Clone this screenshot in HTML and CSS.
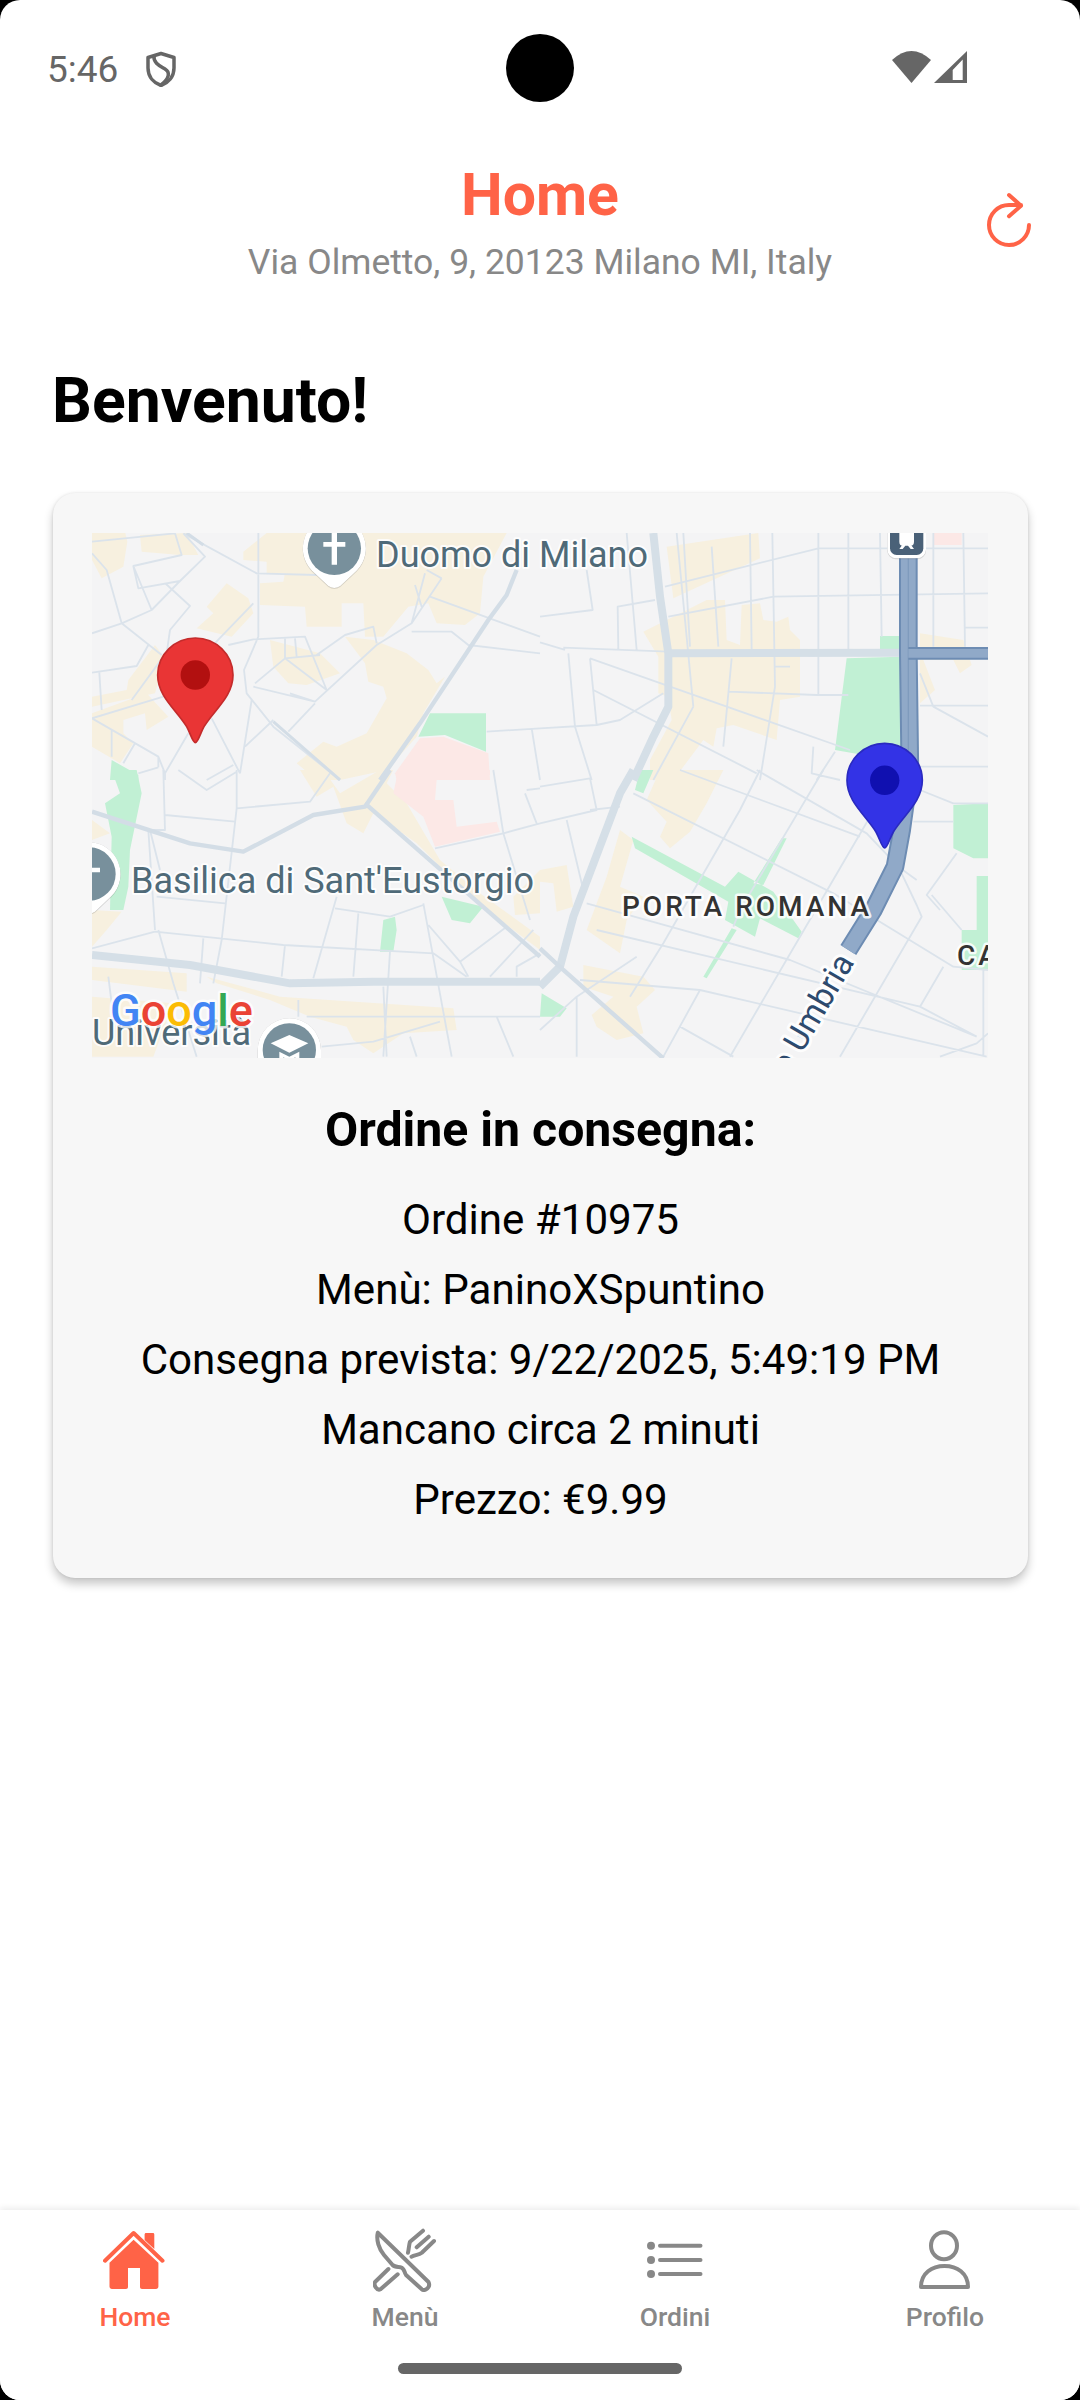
FILE: index.html
```html
<!DOCTYPE html>
<html lang="it">
<head>
<meta charset="utf-8">
<title>Home</title>
<link rel="stylesheet" href="styles.css">
</head>
<body>
<div class="phone">
  <div class="statusbar">
    <div class="status-left">
      <span class="time">5:46</span>
      <svg class="shield" viewBox="0 0 30 36"><path class="shield-line" d="M15 2.500 28 6.500V17C28 26 22 32 15 34.500 8 32 2 26 2 17V6.500Z"/><path class="shield-line" d="M8 4.500C7 12 14 15 19 18 24 21 24 27 15 34"/></svg>
    </div>
    <div class="camera"></div>
    <div class="status-right">
      <svg class="wifi" viewBox="0 0 39 32"><path class="status-fill" d="M0 9Q19.500-9 39 9L19.500 32Z"/></svg>
      <svg class="signal" viewBox="0 0 33 32"><path class="status-fill" fill-rule="evenodd" d="M0 32 33 0V32ZM18.700 29H28.700V8.500L18.700 19Z"/></svg>
    </div>
  </div>

  <header class="topbar">
    <h1 class="title">Home</h1>
    <p class="address">Via Olmetto, 9, 20123 Milano MI, Italy</p>
    <svg class="refresh" viewBox="0 0 50 58"><path class="refresh-line" d="M24 3 36 13.700 24 24.300M36 13H24A20 20 0 1 0 44 33"/></svg>
  </header>

  <main class="content">
    <h2 class="welcome">Benvenuto!</h2>
    <section class="card">
      <svg class="map" viewBox="0 0 896 525">
        <rect class="m-bg" width="896" height="525"/>
        <!-- areas -->
        <g transform="translate(-52 -53) scale(.33333)">
          <path class="m-beige" d="M156 159H256L262 185 250 260 185 295 156 240ZM300 165 440 159 475 225 420 225 305 215ZM500 380 560 310 625 355 640 400 575 470 470 445 520 400ZM610 215 680 159H1400L1330 290 1320 400 1275 435 1190 430 1165 370 1105 380 1030 470 975 470 970 370 905 370 905 440 800 440 795 380 660 375 660 310 730 305 735 280 680 280 680 245 610 240ZM915 470 1000 480 1100 520 1165 570 1190 610 1215 590 1150 700 1130 770 1040 870 900 900H830L770 850 850 785 890 800 980 760 1040 655 1030 620 985 605 975 550ZM690 480 840 520 900 580 800 615 745 610 700 560ZM265 600 345 495 375 535 345 640 156 680V650L260 630ZM156 700 320 640 385 710 320 750 315 700 250 720 250 760 280 790 240 850 156 800Z"/>
          <path class="m-pink" d="M1065 880 1140 775 1210 770 1345 820 1350 900H1070Z"/>
          <path class="m-green" d="M1170 700H1338V815L1215 765 1135 770ZM215 840 295 885V900H210Z"/>
        </g>
        <g transform="translate(448 -53) scale(.33333)">
          <path class="m-beige" d="M380 200 655 159 660 235 400 355ZM310 455 400 410 500 360H555L560 480 600 495 605 375 660 370 670 420 710 425 745 410 750 450 780 480V650L720 660 710 780 580 735 530 745 520 800 490 780 400 900H330V840L395 720 385 650 355 640 355 530ZM1140 460 1270 480 1295 555 1260 580 1240 540H1150L1185 630 1140 670Z"/>
          <path class="m-green" d="M1020 468H1080L1085 800 1000 830 885 810 920 535 1080 530 1020 510Z"/>
          <path class="m-pink" d="M1180 159H1265V195H1180Z"/>
        </g>
        <g transform="translate(-52 237) scale(.33333)">
          <path class="m-beige" d="M780 0H850L900 70 1020 0H1060L1040 40 1100 100 1200 270 1320 370 1500 500V540L1300 390 1130 220 1060 170 1000 130 970 190 920 160 880 50 830 80ZM500 620 720 680 1240 715 1250 780 1090 790 1000 850 940 810 920 770 810 740 690 690 530 640ZM156 590 440 610V665L156 630ZM156 150 210 190 156 210ZM156 420 245 425 200 480 156 530ZM156 680 400 700 340 860H156ZM1420 380 1500 300V430L1425 435Z"/>
          <path class="m-pink" d="M1075 0H1350V15L1190 30 1185 90H1240L1250 170 1370 155 1380 185 1185 230 1150 140 1060 70Z"/>
          <path class="m-green" d="M215 0H290L305 70 270 240 265 350 250 420H210L215 200 195 100 240 70ZM1030 450 1065 440 1070 480 1060 545H1020ZM1205 380 1330 410 1290 460 1235 450Z"/>
        </g>
        <g transform="translate(448 237) scale(.33333)">
          <path class="m-beige" d="M360 0H550L500 100 450 185 390 235 360 200 380 155 320 90ZM240 180 280 210 240 350 310 380 260 450 240 550 140 480 200 320ZM0 300 80 285 100 410 50 425 40 340 0 335ZM130 585 310 620 345 660 290 710 310 790 230 810 170 770 155 735 220 680 130 650Z"/>
          <path class="m-green" d="M275 200 555 350 595 305 700 365 785 485 775 505 660 445 645 500 555 450 565 395 285 235ZM740 205H725L640 340 670 345ZM590 480 575 475 490 620 500 625ZM1240 105 1344 100V265H1300L1240 235ZM1310 318H1344V480H1310ZM1265 480H1344V600H1265ZM5 670 80 715 60 740H0ZM300 0H340L310 70 285 60Z"/>
        </g>
        <!-- streets -->
        <g class="m-street" transform="translate(-52 -53) scale(.33333)">
          <path d="M156 185 405 160M156 220 200 270 245 430 335 390 280 258 425 225 405 160M245 430 156 460M280 258 295 325 420 303 495 230 430 160M378 312 450 378 390 450 380 520M335 390 420 303M245 430 365 525M156 578 290 558 325 495M178 578 185 690M156 715 370 650 640 370M275 660 370 530M430 160 650 280 830 285M655 159V470L612 570 620 640 700 740 900 900M565 495 640 478 795 470 860 630M735 475V535L840 525M765 475 770 530M860 630 735 535 645 610M750 640 825 665 1010 495 1115 430 1155 280M830 525 915 465 1000 440 1010 490M1115 455H1235L1285 495 1500 520M1170 350 1500 470M1205 295 1115 430M1125 315 1145 380M1205 295 1160 270M640 620 825 665M745 755 825 670M615 800 700 720M635 660 600 880M515 715 600 880M580 855 500 900M445 760 375 880V900M156 715 355 830 375 880M215 750V830M285 790 250 850M295 880 355 862M355 830V862M1340 755 1500 745M1475 745 1500 900"/>
        </g>
        <g class="m-street" transform="translate(448 -53) scale(.33333)">
          <path d="M0 410 158 390 140 270M260 159 290 510M235 510 233 380 345 360M375 320 835 205H1344M410 159 460 680M430 159 450 500M515 200 535 500M630 159 635 510M697 159 705 620 660 900M835 159V645M925 159V510M1020 159 1025 470M1180 159V500M1270 159 1275 500M385 410 700 350 1344 340M1275 443H1344M0 487 75 510M70 503 385 515M85 520 105 740 155 900M150 535 170 735M0 745 170 735 240 720 370 640M150 535 930 810M160 630 650 880M565 635 830 645H925M575 535 550 800M705 560H750M1140 580 1180 680 1344 770M1140 677H1344M1140 860H1344M820 800 815 880 900 900M885 815 830 900M460 680 340 900"/>
        </g>
        <g class="m-street" transform="translate(-52 237) scale(.33333)">
          <path d="M370 0 375 180 325 180 345 480M590 115 810 95 870 10M590 0V115L545 510 520 640M375 135 585 155M415 0 500 60 590 5M350 380 555 400M345 485 156 535M345 485 730 525 1180 550 1280 620M355 480 400 640M490 505 480 640M735 525 725 620M890 380 820 625M885 415 1050 440 1150 405M955 430 940 620M1050 545 1030 860M1150 400 1220 780 1235 860M1165 465 1260 575 1400 470M1260 575 1285 620M1350 620 1480 480M1430 620V590L1500 550M775 690V740M205 620 215 700M800 740H1500M845 830 1000 815 1200 755M1360 0 1390 190 1500 160M1390 190 1470 450M1185 235 1390 190M1030 650 1040 860M1110 800 1130 860M1370 740 1420 860M1460 60 1500 55M1455 70 1490 160M400 640 470 860M330 180 360 300"/>
        </g>
        <g class="m-street" transform="translate(448 237) scale(.33333)">
          <path d="M0 50 150 25 170 120 0 160M80 150 130 360M150 120 240 110M280 70 880 370 1240 590 1344 600M420 0 960 200M650 0 980 190 1075 290 1130 405 1145 440 900 860M660 0 600 120 370 520 270 680M850 0 600 420 580 470M990 140 780 500 570 860M1250 250 1160 375 1200 420M1140 710 1210 590M140 400 750 570 1310 800M170 480 1140 710M120 630 480 660 1340 860M420 770 580 860M480 660 370 860M1120 155H1240M1140 60 1240 100H1344M1075 290 1130 330M1175 375 1265 480M1330 600V860M1310 820 1200 860M1310 820 1344 790M110 680V860M0 780 110 680 290 560M1140 710 1310 800"/>
        </g>
        <!-- main roads -->
        <g transform="translate(-52 -53) scale(.33333)">
          <path class="m-road" d="M1430 270 1400 345 1345 420 1140 730 1020 900"/>
          <path class="m-rail" d="M440 159 490 195M700 725 900 900"/>
        </g>
        <g transform="translate(448 -53) scale(.33333)">
          <path class="m-road-wide" d="M340 159 360 350 385 520V680L340 770 280 900"/>
          <path class="m-road-wide" d="M385 520 1085 518"/>
          <path class="m-route-edge" d="M1105 159V520L1110 900"/>
          <path class="m-route" d="M1105 159V520L1110 900"/>
          <path class="m-route-center" d="M1105 159V900"/>
          <path class="m-route-edge m-route-thin" d="M1105 520H1344"/>
          <path class="m-route m-route-thin-core" d="M1105 520H1344"/>
        </g>
        <g transform="translate(-52 237) scale(.33333)">
          <path class="m-road-wide" d="M156 555 450 585 750 640 1000 635H1500"/>
          <path class="m-road" d="M156 125 450 220 610 245 820 135 975 110 1050 0"/>
          <path class="m-road" d="M975 100 1500 560"/>
        </g>
        <g transform="translate(448 237) scale(.33333)">
          <path class="m-road-wide" d="M280 0 240 70 100 440 60 590 0 650"/>
          <path class="m-road" d="M0 535 70 600 370 865"/>
          <path class="m-route-edge" d="M1110 0 1085 180 1065 290 1000 420 925 540"/>
          <path class="m-route" d="M1110 0 1085 180 1065 290 1000 420 925 540"/>
          <path class="m-route-patch" d="M805 765 785 805"/>
        </g>
        <!-- place markers -->
        <g class="m-poi" transform="translate(-52 -53) scale(.33333)">
          <path class="m-poi-pin" d="M883 110A95 95 0 0 0 816 272L865 318Q883 330 901 318L950 272A95 95 0 0 0 883 110Z"/>
          <circle class="m-poi-disc" cx="883" cy="205" r="80"/>
          <path class="m-poi-glyph" d="M875 159H891V186H916V200H891V254H875V200H850V186H875Z"/>
        </g>
        <g class="m-poi" transform="translate(-52 237) scale(.33333)">
          <path class="m-poi-pin" d="M147 217A95 95 0 0 0 80 379L129 425Q147 437 165 425L214 379A95 95 0 0 0 147 217Z"/>
          <circle class="m-poi-disc" cx="147" cy="312" r="80"/>
          <path class="m-poi-glyph" d="M139 266H155V293H180V307H155V361H139V307H114V293H139Z"/>
          <path class="m-poi-pin" d="M748 745A95 95 0 0 0 653 840V900H843V840A95 95 0 0 0 748 745Z"/>
          <circle class="m-poi-disc" cx="748" cy="840" r="80"/>
          <path class="m-poi-glyph" d="M692 820 748 795 805 820 748 848ZM718 845 748 860 778 845V900H718Z"/>
          <path class="m-poi-disc" d="M730 862 748 872 766 862V900H730Z"/>
        </g>
        <g class="m-poi" transform="translate(448 -53) scale(.33333)">
          <rect class="m-poi-pin" x="1042" y="90" width="116" height="145" rx="26"/>
          <rect class="m-train" x="1050" y="90" width="100" height="135" rx="20"/>
          <path class="m-poi-glyph" d="M1078 159H1122V185Q1122 197 1112 197H1088Q1078 197 1078 185ZM1085 197H1096L1088 207H1078ZM1104 197H1115L1122 207H1112Z"/>
        </g>
        <!-- labels -->
        <text class="m-label" x="284" y="34">Duomo di Milano</text>
        <text class="m-label" x="39" y="360">Basilica di Sant'Eustorgio</text>
        <text class="m-label" x="0" y="512">Università</text>
        <text class="m-district" x="530" y="383">PORTA ROMANA</text>
        <text class="m-district" x="865" y="432">CA</text>
        <text class="m-street-label" x="763" y="429" transform="rotate(-60 763 429)">Viale Umbria</text>
        <text class="m-google" x="18" y="493"><tspan class="g-blue">G</tspan><tspan class="g-red">o</tspan><tspan class="g-yellow">o</tspan><tspan class="g-blue">g</tspan><tspan class="g-green">l</tspan><tspan class="g-red">e</tspan></text>
        <!-- pins -->
        <path class="pin pin-red" transform="translate(-52 -53) scale(.33333)" d="M466 474C404 474 353 524 353 585 353 650 410 690 440 740 452 762 458 788 466 788 474 788 480 762 492 740 522 690 579 650 579 585 579 524 528 474 466 474Z"/>
        <circle class="pin-dot-red" cx="103.3" cy="142" r="14.7"/>
        <path class="pin pin-blue" transform="translate(448 237) scale(.33333) translate(568 -554)" d="M466 474C404 474 353 524 353 585 353 650 410 690 440 740 452 762 458 788 466 788 474 788 480 762 492 740 522 690 579 650 579 585 579 524 528 474 466 474Z"/>
        <circle class="pin-dot-blue" cx="792.7" cy="247.3" r="14.7"/>
      </svg>
      <h3 class="card-title">Ordine in consegna:</h3>
      <p class="card-line">Ordine #10975</p>
      <p class="card-line">Menù: PaninoXSpuntino</p>
      <p class="card-line">Consegna prevista: 9/22/2025, 5:49:19 PM</p>
      <p class="card-line">Mancano circa 2 minuti</p>
      <p class="card-line">Prezzo: €9.99</p>
    </section>
  </main>

  <nav class="tabbar">
    <a class="tab tab-active">
      <svg class="tab-icon" viewBox="0 0 64 64"><path class="icon-fill" d="M41.6 6.500C41.6 5.600 42.200 5 43 5H50C50.800 5 51.300 5.600 51.300 6.500V21L41.600 12ZM30.600 11.700 55.400 34.700V58.500C55.400 60 54.400 61 53 61H39C37.800 61 37 60.200 37 59V40H25V59C25 60.200 24.200 61 23 61H9C7.600 61 6.500 60 6.500 58.500V34.700Z"/><path class="icon-roof" d="M2 32.700 30.600 5 59.500 32.700"/></svg>
      <span class="tab-label">Home</span>
    </a>
    <a class="tab">
      <svg class="tab-icon" viewBox="0 0 64 64"><path class="icon-line" d="M4.800 4.700C3 12 6 21 11 27L19.600 37C22 39.500 26 38.500 28 39.300 31.500 40.500 31 44 33 47L48.800 61.300C52 63.500 58 59.500 55.500 54ZM15.400 41 2.300 53.700C0 57 4 63 7.500 61.300L24.700 46.300M35 24.700C36 20 36 16.500 37 13.700L50 2.700M43.700 19.300 55.700 8.700M38.500 28.700C42 27 46 27 48.800 24.700L61 13"/></svg>
      <span class="tab-label">Menù</span>
    </a>
    <a class="tab">
      <svg class="tab-icon" viewBox="0 0 64 64"><circle class="icon-fill" cx="8" cy="17.700" r="4"/><circle class="icon-fill" cx="8" cy="32" r="4"/><circle class="icon-fill" cx="8" cy="46" r="4"/><path class="icon-line" d="M17 17.700H57.500M17 32H57.500M17 46H57.500"/></svg>
      <span class="tab-label">Ordini</span>
    </a>
    <a class="tab">
      <svg class="tab-icon" viewBox="0 0 64 64"><ellipse class="icon-line" cx="31" cy="17.700" rx="13" ry="13.500"/><path class="icon-line" d="M8 59C8 45 19 38 31.500 38 44 38 55 45 55 59Z"/></svg>
      <span class="tab-label">Profilo</span>
    </a>
    <div class="home-indicator"></div>
  </nav>
</div>
</body>
</html>
```

FILE: styles.css
```css
html, body { margin: 0; padding: 0; background: #000; }
body { font-family: Roboto, "Noto Sans", sans-serif; }
h1, h2, h3, p { margin: 0; }

.phone {
  width: 1080px;
  height: 2400px;
  background: #fff;
  border-radius: 20px;
  display: flex;
  flex-direction: column;
  overflow: hidden;
}

/* Status bar */
.statusbar {
  position: relative;
  height: 136px;
  flex: none;
  display: flex;
  justify-content: space-between;
  align-items: flex-start;
  padding: 0 113px 0 47px;
  box-sizing: border-box;
}
.status-left { display: flex; align-items: center; gap: 28px; height: 52px; margin-top: 44px; }
.time { font-size: 37px; color: #666; line-height: 48px; }
.shield { width: 30px; height: 36px; margin-top: -3px; }
.shield-line { fill: none; stroke: #666; stroke-width: 3.500; stroke-linejoin: round; }
.camera { position: absolute; left: 506px; top: 34px; width: 68px; height: 68px; border-radius: 50%; background: #000; }
.status-right { display: flex; gap: 3px; margin-top: 51px; }
.wifi { width: 39px; height: 32px; }
.signal { width: 33px; height: 32px; }
.status-fill { fill: #666; }

/* Header */
.topbar { position: relative; flex: none; height: 229px; text-align: center; }
.title { font-size: 59px; font-weight: 700; color: #ff6347; line-height: 66px; margin-top: 26px; }
.address { font-size: 35.500px; color: #888; line-height: 44px; margin-top: 12px; }
.refresh { position: absolute; left: 985px; top: 56px; width: 50px; height: 58px; }
.refresh-line { fill: none; stroke: #ff6347; stroke-width: 4; stroke-linecap: round; stroke-linejoin: round; }

/* Content */
.content { flex: 1; padding: 0 53px; box-sizing: border-box; }
.welcome { font-size: 62.500px; font-weight: 700; color: #000; line-height: 72px; margin: 0 0 56px -1px; }
.card {
  width: 975px;
  background: #f7f7f7;
  border-radius: 22px;
  box-shadow: 0 6px 10px rgba(0,0,0,.22), 0 0 3px rgba(0,0,0,.1);
  padding: 40px 39px 43px;
  box-sizing: border-box;
  text-align: center;
}
.map { display: block; width: 896px; height: 525px; }
.card-title { font-size: 48.200px; font-weight: 700; color: #000; line-height: 56px; margin-top: 44px; margin-bottom: 27px; }
.card-line { font-size: 42.100px; color: #000; line-height: 70px; }

/* Map */
.m-bg { fill: #f4f4f5; }
.m-beige { fill: #f7f0df; }
.m-pink { fill: #fce8e6; }
.m-green { fill: #c1f0d4; }
.m-street { fill: none; stroke: #dbe3eb; stroke-width: 5.500; stroke-linejoin: round; }
.m-road { fill: none; stroke: #d3dde6; stroke-width: 13; stroke-linejoin: round; }
.m-rail { fill: none; stroke: #d3dde6; stroke-width: 9; }
.m-road-wide { fill: none; stroke: #d5dfe7; stroke-width: 24; stroke-linejoin: round; }
.m-route-edge { fill: none; stroke: #6d8cb3; stroke-width: 56; stroke-linejoin: round; }
.m-route { fill: none; stroke: #90a9c8; stroke-width: 44; stroke-linejoin: round; }
.m-route-center { fill: none; stroke: #7f9bbd; stroke-width: 4; }
.m-route-thin { stroke-width: 38; }
.m-route-thin-core { stroke-width: 26; }
.m-route-patch { fill: none; stroke: #a9bcd4; stroke-width: 30; }
.m-poi { filter: drop-shadow(0 1px 1px rgba(0,0,0,.35)); }
.m-poi-pin { fill: #fff; }
.m-poi-disc { fill: #78909c; }
.m-poi-glyph { fill: #fff; }
.m-train { fill: #4a6178; }
.m-label, .m-district, .m-street-label, .m-google {
  font-family: Roboto, sans-serif;
  paint-order: stroke;
  stroke: #fff;
  stroke-linejoin: round;
}
.m-label { font-size: 36px; fill: #4f6a78; stroke-width: 4; stroke-opacity: .85; }
.m-district { font-size: 28px; font-weight: 500; letter-spacing: 3px; fill: #333; stroke-width: 5; stroke-opacity: .85; }
.m-street-label { font-size: 33px; fill: #2d4a6e; stroke-width: 6; stroke-opacity: .9; text-anchor: end; }
.m-google { font-size: 45px; font-weight: 500; stroke-width: 5; stroke-opacity: .8; }
.g-blue { fill: #4285f4; }
.g-red { fill: #ea4335; }
.g-yellow { fill: #fbbc05; }
.g-green { fill: #34a853; }
.pin { stroke-width: 5; }
.pin-red { fill: #e93535; stroke: #c42b2b; }
.pin-dot-red { fill: #b21010; }
.pin-blue { fill: #3333e6; stroke: #2a2ac0; }
.pin-dot-blue { fill: #1010b0; }

/* Tab bar */
.tabbar {
  position: relative;
  flex: none;
  height: 190px;
  display: grid;
  grid-template-columns: repeat(4, 270px);
  box-sizing: border-box;
  box-shadow: 0 -2px 6px rgba(0,0,0,.08);
  background: #fff;
}
.tab { display: flex; flex-direction: column; align-items: center; padding-top: 18px; color: #888; }
.tab-active { color: #ff6347; }
.tab-icon { width: 64px; height: 64px; flex: none; }
.tab-label { font-size: 26.500px; font-weight: 500; line-height: 30px; margin-top: 10px; }
.icon-fill { fill: currentColor; }
.icon-line { fill: none; stroke: currentColor; stroke-width: 4; stroke-linecap: round; stroke-linejoin: round; }
.icon-roof { fill: none; stroke: currentColor; stroke-width: 4; stroke-linecap: round; stroke-linejoin: round; }
.home-indicator { position: absolute; left: 398px; top: 153px; width: 284px; height: 11px; border-radius: 6px; background: #666; }
```
